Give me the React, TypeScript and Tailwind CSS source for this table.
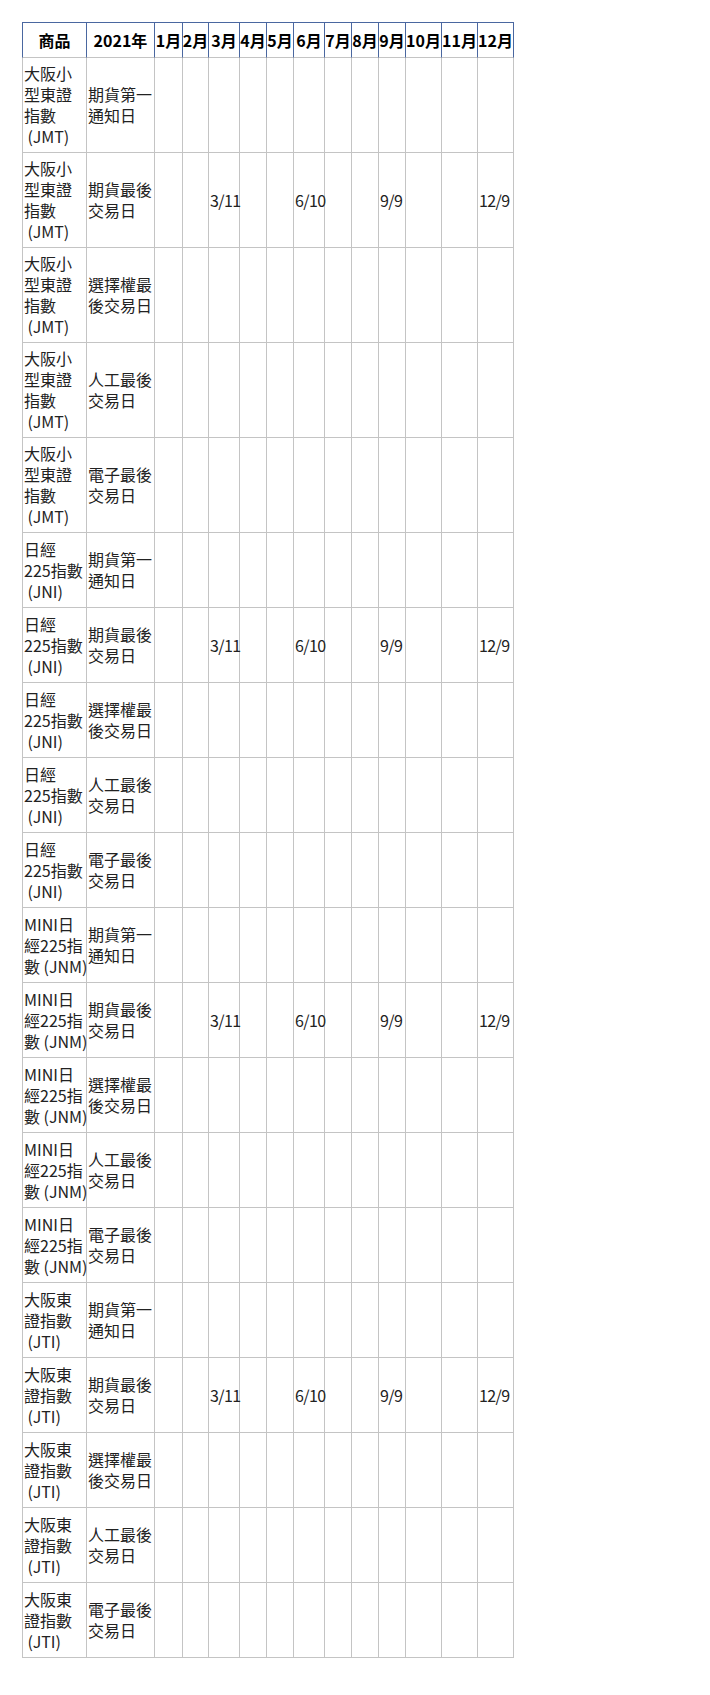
import React from "react";

const products = [
  { lines: ["大阪小", "型東證", "指數", " (JMT)"], h: "h-[95px]" },
  { lines: ["日經", "225指數", " (JNI)"], h: "h-[75px]" },
  { lines: ["MINI日", "經225指", "數 (JNM)"], h: "h-[75px]" },
  { lines: ["大阪東", "證指數", " (JTI)"], h: "h-[75px]" },
];

const events = [
  { lines: ["期貨第一", "通知日"], dates: false },
  { lines: ["期貨最後", "交易日"], dates: true },
  { lines: ["選擇權最", "後交易日"], dates: false },
  { lines: ["人工最後", "交易日"], dates: false },
  { lines: ["電子最後", "交易日"], dates: false },
];

const months = ["1月", "2月", "3月", "4月", "5月", "6月", "7月", "8月", "9月", "10月", "11月", "12月"];
const dateMap: Record<number, string> = { 2: "3/11", 5: "6/10", 8: "9/9", 11: "12/9" };

const gridCols =
  "grid grid-cols-[65px_68px_28px_26px_31px_27px_27px_31px_27px_27px_27px_36px_36px_36px]";

function Lines({ lines }: { lines: string[] }) {
  return (
    <>
      {lines.map((l, i) => (
        <span key={i} className="block whitespace-pre">
          {l}
        </span>
      ))}
    </>
  );
}

export default function App() {
  return (
    <div
      className="min-h-[1695px] bg-white pl-[22px] pt-[22px]"
      style={{ fontFamily: '"Noto Sans CJK TC", "Noto Sans", sans-serif' }}
    >
      <div className={`${gridCols} w-[492px] text-[16px] leading-[21px]`}>
        {/* header */}
        <div className="flex h-[36px] items-center justify-center whitespace-nowrap border border-[#4a67a0] border-b-[#c4c4c4] font-bold text-black">
          商品
        </div>
        <div className="flex h-[36px] items-center justify-center whitespace-nowrap border-t border-r border-b border-[#4a67a0] border-b-[#c4c4c4] font-bold text-black">
          2021年
        </div>
        {months.map((m) => (
          <div
            key={m}
            className="flex h-[36px] items-center justify-center whitespace-nowrap border-t border-r border-b border-[#4a67a0] border-b-[#c4c4c4] font-bold text-black"
          >
            {m}
          </div>
        ))}

        {/* body */}
        {products.map((p) =>
          events.map((e, ei) => (
            <React.Fragment key={p.lines.join("") + ei}>
              <div
                className={`flex ${p.h} flex-col justify-center border-l border-r border-b border-[#c4c4c4] px-px text-[#222]`}
              >
                <Lines lines={p.lines} />
              </div>
              <div
                className={`flex ${p.h} flex-col justify-center border-r border-b border-[#c4c4c4] px-px text-[#222]`}
              >
                <Lines lines={e.lines} />
              </div>
              {months.map((m, mi) => (
                <div
                  key={m}
                  className={`flex ${p.h} items-center whitespace-nowrap border-r border-b border-[#c4c4c4] px-px tracking-[-0.6px] text-[#222]`}
                >
                  {e.dates && dateMap[mi] ? dateMap[mi] : ""}
                </div>
              ))}
            </React.Fragment>
          ))
        )}
      </div>
    </div>
  );
}
